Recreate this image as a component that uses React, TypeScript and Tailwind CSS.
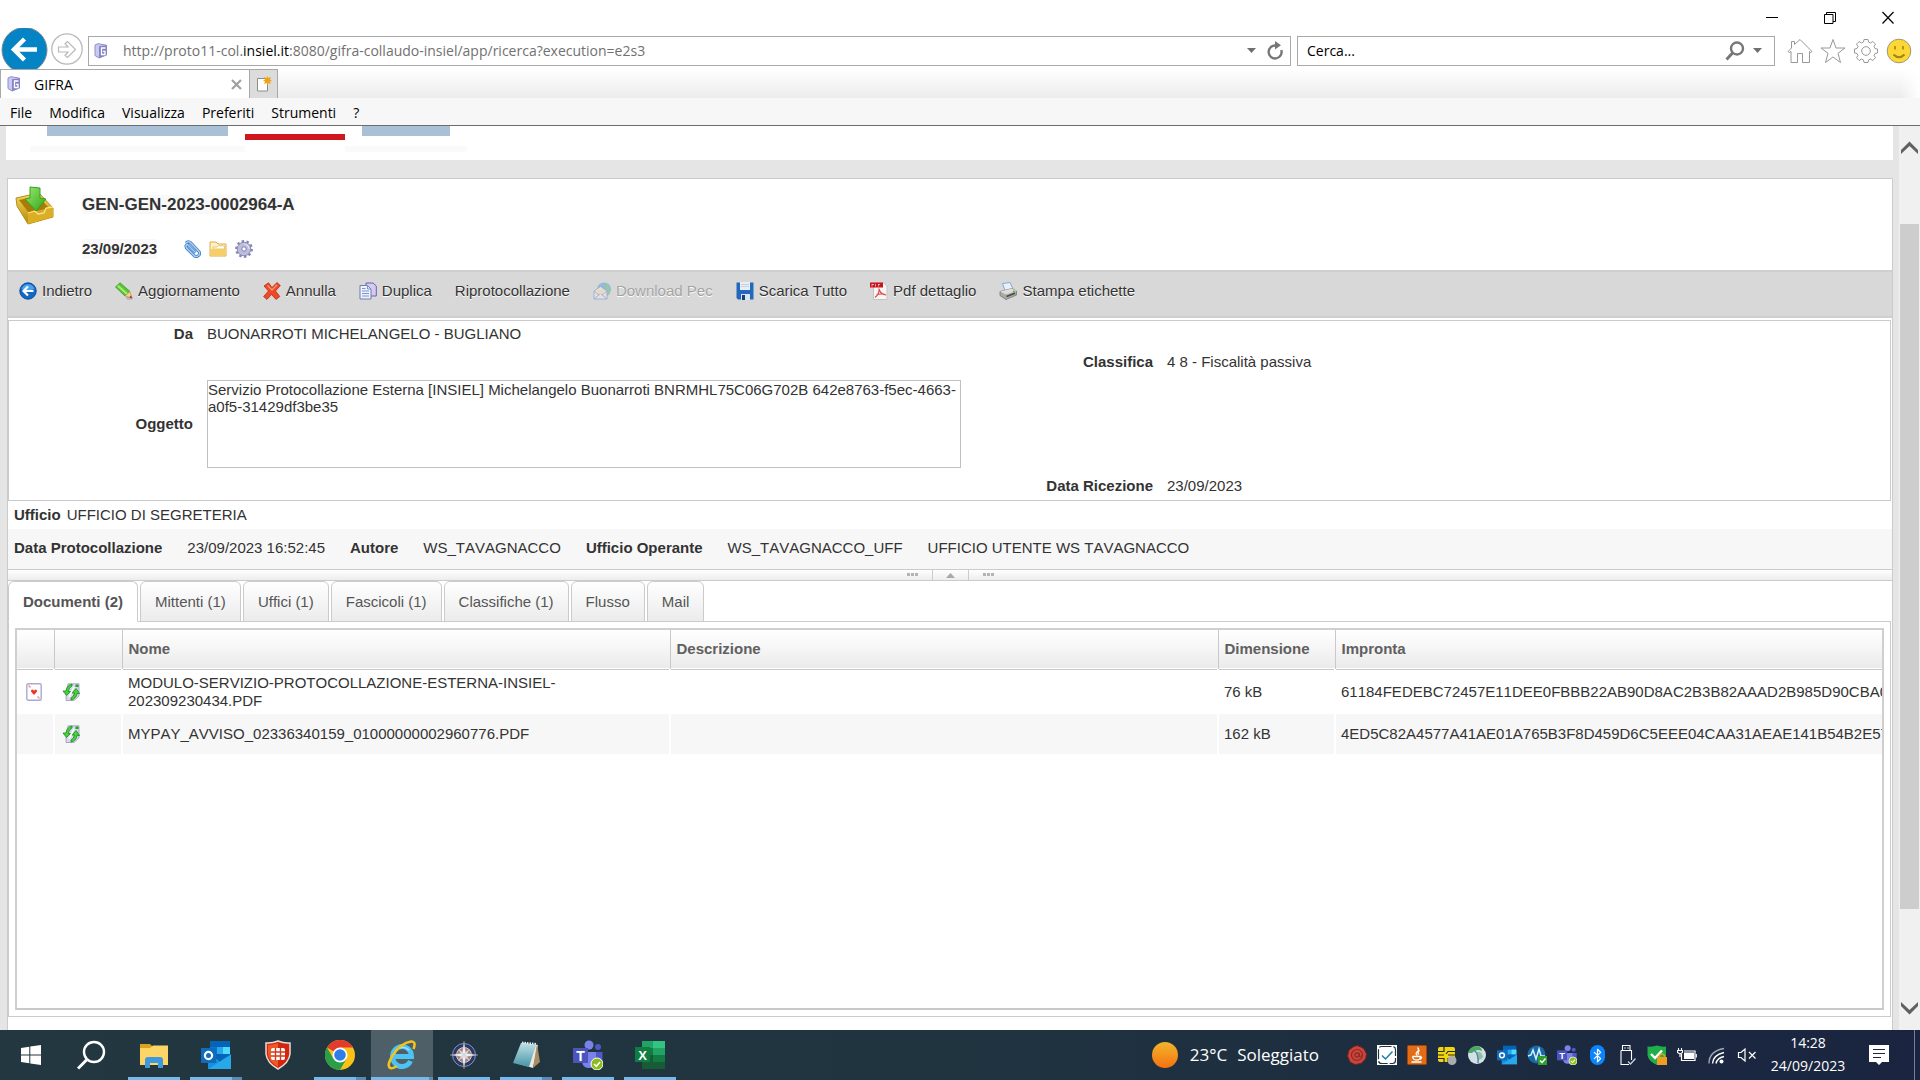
import React, { useState } from 'react';
import { Bluetooth } from 'lucide-react';

const ServerIcon = () => (
  <svg width="14" height="16" viewBox="0 0 14 16" className="shrink-0" aria-hidden="true">
    <path d="M1 2 L4 0.7 L12.5 2.2 L12.5 12 L5 15 L1 12.5 Z" fill="#c9c9f2" stroke="#8f8fc8" />
    <path d="M5 3.2 L13 2.2 L13 12 L5 15 Z" fill="#8484c6" />
    <path d="M11.5 5 H7.5 V11.5 H11 V8.3 H9" fill="none" stroke="#fff" strokeWidth="1.3" />
  </svg>
);

const InboxIcon = () => (
  <svg width="40" height="40" viewBox="0 0 40 40" aria-hidden="true">
    <defs>
      <linearGradient id="tray" x1="0" y1="0" x2="0" y2="1">
        <stop offset="0" stopColor="#f6d75c" />
        <stop offset="1" stopColor="#b98a0a" />
      </linearGradient>
      <linearGradient id="down" x1="0" y1="0" x2="1" y2="1">
        <stop offset="0" stopColor="#9bea6c" />
        <stop offset="1" stopColor="#2fa51c" />
      </linearGradient>
    </defs>
    <path d="M1 13 L24 8 L38 23 L38 32 L13 39 L2 21 Z" fill="url(#tray)" stroke="#b58f1c" />
    <path d="M4 15 L23 11 L34 23 L14 28 Z" fill="#a97b08" />
    <path d="M13 28 L20 26 L23 29 L29 28 L31 23 L38 22 L38 32 L13 39 Z" fill="#dcae24" />
    <path d="M13 28 L20 26 L23 29 L29 28 L31 23 L38 22" fill="none" stroke="#fbe58a" strokeWidth="1.3" />
    <path d="M15 2 L25 3 L25 13 L31 14 L21 26 L10 14 L15 13 Z" fill="url(#down)" stroke="#36a01f" />
  </svg>
);

const Svg18 = ({ children, className = '' }: any) => (
  <svg width="18" height="18" viewBox="0 0 18 18" className={`shrink-0 ${className}`} aria-hidden="true">
    {children}
  </svg>
);

const ClipIcon = () => (
  <Svg18>
    <path d="M3 3 Q5 0.5 8 3 L16 11.5 Q17.5 14.5 15 16 Q12.5 17.5 10.5 15 L3.5 8 Q2 5 4.5 4.5 L12.5 12.5" fill="none" stroke="#3f7fc4" strokeWidth="3" />
    <path d="M3 3 Q5 0.5 8 3 L16 11.5 Q17.5 14.5 15 16 Q12.5 17.5 10.5 15 L3.5 8 Q2 5 4.5 4.5 L12.5 12.5" fill="none" stroke="#a9d0f3" strokeWidth="1.4" />
  </Svg18>
);

const SmallFolderIcon = () => (
  <Svg18>
    <path d="M1 2 H7 L9 4 H17 V16 H1 Z" fill="#fff3c4" stroke="#e3a843" />
    <path d="M4 7 H8 L9.5 5.8 H15.5 V9 H4 Z" fill="#fff" stroke="#e6b85c" strokeWidth="0.8" />
    <path d="M2 9 H16 V15 H2 Z" fill="#f5cf63" />
  </Svg18>
);

const CogIcon = () => (
  <Svg18>
    <circle cx="9" cy="9" r="7.2" fill="none" stroke="#8585b3" strokeWidth="3.4" strokeDasharray="2.3 2.2" />
    <circle cx="9" cy="9" r="6.8" fill="#bcbcdd" stroke="#8b8bb8" />
    <circle cx="9" cy="9" r="2.2" fill="#fff" stroke="#7d7dac" />
    <path d="M9 4 A5 5 0 0 1 14 9" fill="none" stroke="#e2e2f4" strokeWidth="1.2" />
  </Svg18>
);

const BackIcon = () => (
  <Svg18>
    <circle cx="9" cy="9" r="8.2" fill="#1268c4" stroke="#0c4c96" />
    <path d="M2.5 7 A6.8 6.8 0 0 1 15.5 7 Q9 9.5 2.5 7" fill="#49a3ee" />
    <path d="M14.5 9 H5 M9 4.5 L4.5 9 L9 13.5" fill="none" stroke="#fff" strokeWidth="2.2" />
  </Svg18>
);

const PencilIcon = () => (
  <Svg18>
    <ellipse cx="14.5" cy="16" rx="3.5" ry="1.8" fill="#b5b5b5" />
    <path d="M0.5 5 L5 0.8 L15 9.5 L10 14 Z" fill="#5cc531" stroke="#3a9a1c" strokeWidth="0.8" />
    <path d="M2.8 3.8 L12.5 12.2" stroke="#a6ee7c" strokeWidth="1.8" />
    <path d="M10 14 L15 9.5 L16.8 16 Z" fill="#f3cf9a" stroke="#c78a4a" strokeWidth="0.7" />
    <path d="M14.3 15.2 L16.2 13.5 L16.9 16.6 Z" fill="#a1301c" />
  </Svg18>
);

const CrossIcon = () => (
  <Svg18>
    <path d="M1 4 L5.5 0.8 L9 5.5 L14 0.6 L17.3 3.5 L12.5 9 L16.8 14.5 L13 17.4 L8.5 12.5 L4 17.4 L0.6 14.5 L5.5 9 Z" fill="#ee4a28" stroke="#b92a12" strokeWidth="0.8" />
    <path d="M4.5 3.5 L9 8 L14 2.8" fill="none" stroke="#ff9a7c" strokeWidth="1.2" />
  </Svg18>
);

const CopyIcon = () => (
  <Svg18>
    <path d="M7 1 H14 L17.3 4 V14 H7 Z" fill="#d4cbef" stroke="#6c5fae" />
    <path d="M1 3.5 H8.5 L12 7 V17 H1 Z" fill="#eef2fd" stroke="#6a7fb5" />
    <path d="M8.5 3.5 V7 H12 M3 9 H10 M3 11.5 H10 M3 14 H10 M3 6.5 H6.5" fill="none" stroke="#7f95c6" />
  </Svg18>
);

const MailIcon = () => (
  <Svg18 className="opacity-50">
    <circle cx="11" cy="7.5" r="7" fill="#4e9fd4" />
    <path d="M11 1 Q17.5 4 16.5 10 L13 12 Q15 6 11 1" fill="#62bd58" />
    <path d="M1 9 L7.5 4.5 L14 9 V17 H1 Z" fill="#e9edfa" stroke="#7a86bb" />
    <path d="M1 17 L7.5 11.5 L14 17 M1 9 L6 13 M14 9 L9 13" fill="none" stroke="#7a86bb" />
    <path d="M4 7.5 H11 V10 L7.5 12.5 L4 10 Z" fill="#f4dd9b" />
  </Svg18>
);

const SaveIcon = () => (
  <Svg18>
    <path d="M0.5 0.5 H17.5 V17.5 H2 L0.5 16 Z" fill="#2468bd" />
    <path d="M4 0 H14 V8 H4 Z" fill="#e9eef4" />
    <path d="M5 2.5 H13 M5 4.5 H13" stroke="#c8d0dc" />
    <path d="M5 12 H14 V18 H5 Z" fill="#dbe3ec" />
    <path d="M6 13 H9 V18 H6 Z" fill="#163f80" />
  </Svg18>
);

const PdfIcon = () => (
  <Svg18>
    <path d="M3.5 1 H14 L17 4 V17.5 H3.5 Z" fill="#f7f7f7" stroke="#c4c4c4" />
    <rect x="0" y="0.5" width="13" height="5" fill="#c9151b" />
    <path d="M2 2 V4.5 M2 2.5 H4 M5.5 2 V4.5 M8.5 2 V4.5 M8.5 2.5 H10" stroke="#fff" strokeWidth="0.6" />
    <path d="M9 6.5 C9.5 10 8 13 5 15.5 M9 7 C10 10.5 12.5 12.5 16 13 M6.5 13 C9 11.8 12 11.6 15.5 12.6" fill="none" stroke="#e2504b" strokeWidth="1.2" />
  </Svg18>
);

const PrintIcon = () => (
  <Svg18>
    <path d="M3.5 1.5 L11 0.5 L14.5 8 L6.5 10 Z" fill="#e6f1fb" stroke="#8aa9c9" />
    <path d="M1 9.5 L13 6.5 L17.5 9 V13 L7 17.5 L1 13.5 Z" fill="#a9aaa5" stroke="#777" strokeWidth="0.8" />
    <path d="M1 9.5 L13 6.5 L17.5 9 L7 12.5 Z" fill="#dcdcd8" />
    <path d="M7.5 14.5 L16 11.2" stroke="#4a4a4a" strokeWidth="1.6" />
    <circle cx="14.8" cy="9.6" r="1" fill="#62b536" />
  </Svg18>
);

const CardIcon = () => (
  <svg width="16" height="18" viewBox="0 0 16 18" aria-hidden="true">
    <rect x="0.8" y="0.8" width="14.4" height="16.4" rx="1.5" fill="#fdfdff" stroke="#a9a9d3" strokeWidth="1.4" />
    <path d="M8 12 L5 8.5 Q4.8 6.5 6.5 6.6 Q7.6 6.8 8 8 Q8.4 6.8 9.5 6.6 Q11.2 6.5 11 8.5 Z" fill="#f0341c" />
    <path d="M2.5 2.5 L4.5 4.5 M11.5 13.5 L13.5 15.5" stroke="#f38b7a" strokeWidth="1.2" />
  </svg>
);

const SyncDocIcon = () => (
  <Svg18>
    <path d="M6 0.8 H17 V13 L12 17.5 H4 V10 Z" fill="#d8d8ea" stroke="#9a9abc" strokeWidth="0.8" />
    <path d="M10 1 Q4.5 2.5 4 8 H1 L4.500 12.500 L8.500 8.500 H6.300 Q6.800 4.500 10 3 Z" fill="#45d23b" stroke="#168c19" strokeWidth="0.8" />
    <path d="M9 17 Q14.500 15.500 15 10.500 H17.600 L14 5.500 L10 10 H12.500 Q12 13.500 9 15 Z" fill="#45d23b" stroke="#168c19" strokeWidth="0.8" />
    <path d="M12 4 L7 14" stroke="#fff" strokeWidth="1.5" />
    <rect x="13.500" y="1.500" width="3" height="2.500" fill="#21a321" />
  </Svg18>
);

const toolbar = [
  { label: 'Indietro', icon: BackIcon },
  { label: 'Aggiornamento', icon: PencilIcon },
  { label: 'Annulla', icon: CrossIcon },
  { label: 'Duplica', icon: CopyIcon },
  { label: 'Riprotocollazione' },
  { label: 'Download Pec', icon: MailIcon, disabled: true },
  { label: 'Scarica Tutto', icon: SaveIcon },
  { label: 'Pdf dettaglio', icon: PdfIcon },
  { label: 'Stampa etichette', icon: PrintIcon },
];

const tabs = ['Documenti (2)', 'Mittenti (1)', 'Uffici (1)', 'Fascicoli (1)', 'Classifiche (1)', 'Flusso', 'Mail'];

const documents = [
  {
    main: true,
    name: 'MODULO-SERVIZIO-PROTOCOLLAZIONE-ESTERNA-INSIEL-202309230434.PDF',
    size: '76 kB',
    hash: '61184FEDEBC72457E11DEE0FBBB22AB90D8AC2B3B82AAAD2B985D90CBA0',
  },
  {
    main: false,
    name: 'MYPAY_AVVISO_02336340159_01000000002960776.PDF',
    size: '162 kB',
    hash: '4ED5C82A4577A41AE01A765B3F8D459D6C5EEE04CAA31AEAE141B54B2E57',
  },
];

const menu = ['File', 'Modifica', 'Visualizza', 'Preferiti', 'Strumenti', '?'];

const BrowserChrome = () => (
  <header className="shrink-0 font-['Open_Sans',sans-serif] text-[14px] text-black">
    <div className="flex h-7 items-end justify-end gap-[46px] pr-[26px]">
      <button aria-label="Riduci a icona">
        <svg width="12" height="18" viewBox="0 0 12 18"><path d="M0 7.5 H12" stroke="#000" /></svg>
      </button>
      <button aria-label="Ripristina">
        <svg width="12" height="18" viewBox="0 0 12 18" fill="none" stroke="#000"><path d="M0.5 4.5 H9 V13.5 H0.5 Z M2.5 4.5 V2.5 H11.5 V11.5 H9" /></svg>
      </button>
      <button aria-label="Chiudi">
        <svg width="12" height="18" viewBox="0 0 12 18"><path d="M0.5 2 L11.5 13.5 M11.5 2 L0.5 13.5" stroke="#000" strokeWidth="1.2" /></svg>
      </button>
    </div>
    <div className="flex h-[41px] items-center overflow-hidden pr-2">
      <button aria-label="Indietro" className="h-[46px] w-12 shrink-0">
        <svg width="48" height="48" viewBox="0 0 48 48">
          <circle cx="24.5" cy="24" r="22.5" fill="#0483c5" stroke="#7d8a92" />
          <path d="M37 23.5 H14 M24.5 13 L14 23.5 L24.5 34" fill="none" stroke="#fff" strokeWidth="4.5" />
        </svg>
      </button>
      <button aria-label="Avanti" className="ml-[2px] shrink-0">
        <svg width="34" height="34" viewBox="0 0 34 34" fill="none">
          <circle cx="17" cy="17" r="15.2" stroke="#b9b9b9" strokeWidth="1.3" />
          <path d="M8.5 15 H18 L15 11.5 L17.5 9.5 L25.5 17.5 L17.5 25.5 L15 23.5 L18 20 H8.5 Z" stroke="#b9b9b9" strokeWidth="1.2" />
        </svg>
      </button>
      <div className="ml-1 mt-1 flex h-[30px] flex-1 items-center border border-[#a9a9a9] pr-[6px] pl-[5px]">
        <ServerIcon />
        <div role="textbox" aria-label="Indirizzo" className="ml-[15px] flex-1 text-[#717171]">
          http://proto11-col.<span className="text-black">insiel.it</span>:8080/gifra-collaudo-insiel/app/ricerca?execution=e2s3
        </div>
        <svg width="9" height="5" viewBox="0 0 9 5" className="mr-[10px]" aria-hidden="true"><path d="M0 0 H9 L4.500 5 Z" fill="#6f6f6f" /></svg>
        <button aria-label="Aggiorna">
          <svg width="18" height="20" viewBox="0 0 18 20">
            <path d="M10 4.500 A6.500 6.500 0 1 0 15.300 9" fill="none" stroke="#777" strokeWidth="2.400" />
            <path d="M9 0 L15 4.300 L9 8.500 Z" fill="#777" />
          </svg>
        </button>
      </div>
      <div className="ml-[6px] mt-1 flex h-[30px] w-[478px] items-center border border-[#a9a9a9] pr-3 pl-[9px]">
        <input aria-label="Cerca" placeholder="Cerca..." className="min-w-0 flex-1 outline-none placeholder:text-black" />
        <svg width="20" height="20" viewBox="0 0 20 20" className="mr-2" aria-hidden="true">
          <circle cx="12" cy="7.500" r="6" fill="none" stroke="#777" strokeWidth="2.400" />
          <path d="M8 11.500 L1.500 18.500" stroke="#777" strokeWidth="3" />
        </svg>
        <svg width="9" height="5" viewBox="0 0 9 5" aria-hidden="true"><path d="M0 0 H9 L4.500 5 Z" fill="#6f6f6f" /></svg>
      </div>
      <div className="ml-3 mt-1 flex gap-[7px]">
        <button aria-label="Pagina iniziale">
          <svg width="26" height="26" viewBox="0 0 26 26" fill="none" stroke="#989898">
            <path d="M1 13.500 L4.500 10 V3.500 H7.500 V6.500 L13 1.500 L25 13.500 L23.500 14.500 L22.500 13.500 V24.500 H15.500 V15.500 H10.500 V24.500 H4 V13.500 L2.500 14.500 Z" />
          </svg>
        </button>
        <button aria-label="Preferiti">
          <svg width="26" height="26" viewBox="0 0 26 26" fill="none" stroke="#989898">
            <path d="M13 1.500 L16 10 H25 L18 15.300 L20.500 24.500 L13 19 L5.500 24.500 L8 15.300 L1 10 H10 Z" />
          </svg>
        </button>
        <button aria-label="Strumenti">
          <svg width="26" height="26" viewBox="0 0 26 26" fill="none" stroke="#989898">
            <path d="M10.500 4 L11 1.500 H15 L15.500 4 L17.500 5 L19.800 3.500 L22.500 6.200 L21 8.500 L22 10.500 L24.500 11 V15 L22 15.500 L21 17.500 L22.500 19.800 L19.800 22.500 L17.500 21 L15.500 22 L15 24.500 H11 L10.500 22 L8.500 21 L6.200 22.500 L3.500 19.800 L5 17.500 L4 15.500 L1.500 15 V11 L4 10.500 L5 8.500 L3.500 6.200 L6.200 3.500 L8.500 5 Z" />
            <circle cx="13" cy="13" r="4.300" />
          </svg>
        </button>
        <button aria-label="Invia feedback">
          <svg width="26" height="26" viewBox="0 0 26 26">
            <circle cx="13" cy="13" r="11.800" fill="#fdd835" stroke="#9f9679" />
            <path d="M9 8 V11.500 M17 8 V11.500" stroke="#a08417" strokeWidth="1.600" />
            <path d="M7.500 16.500 Q13 22 18.500 16.500" fill="none" stroke="#a08417" strokeWidth="2" />
          </svg>
        </button>
      </div>
    </div>
    <div className="flex h-[29px] bg-gradient-to-b from-white to-[#ececec]">
      <div className="flex w-[249px] items-center border-t border-l border-[#a9a9a9] bg-white pr-[7px] pl-[6px]">
        <ServerIcon />
        <span className="ml-[13px] flex-1">GIFRA</span>
        <button aria-label="Chiudi scheda">
          <svg width="11" height="11" viewBox="0 0 11 11"><path d="M1 1 L10 10 M10 1 L1 10" stroke="#a0a0a0" strokeWidth="2.200" /></svg>
        </button>
      </div>
      <button aria-label="Nuova scheda" className="flex w-[29px] items-center justify-center border border-b-0 border-[#a9a9a9] bg-[#dcdcdc]">
        <svg width="16" height="16" viewBox="0 0 16 16">
          <path d="M1.500 2.500 H11.500 V15 H1.500 Z" fill="#fff" stroke="#8c8c8c" />
          <path d="M11.500 0 L12.500 2 L15 1 L14 3.500 L16 4.500 L14 5.500 L15 8 L12.500 7 L11.500 9 L10.500 7 L8 8 L9 5.500 L7 4.500 L9 3.500 L8 1 L10.500 2 Z" fill="#f0a318" />
        </svg>
      </button>
      <div className="ml-auto w-5 bg-gradient-to-l from-white to-transparent" />
    </div>
    <nav className="flex h-7 items-center gap-[17px] border-b border-[#6d6d6d] bg-[#f7f7f7] pt-px pl-[10px]">
      {menu.map(m => <button key={m}>{m}</button>)}
    </nav>
  </header>
);

const DocumentTable = () => (
  <div className="mx-[6px] h-[382px] overflow-hidden border-2 border-[#cfcfcf] border-b-[#c9c9c9]">
    <table className="w-full table-fixed border-collapse text-left">
      <colgroup>
        <col className="w-[37px]" />
        <col className="w-[68px]" />
        <col className="w-[548px]" />
        <col className="w-[548px]" />
        <col className="w-[117px]" />
        <col />
      </colgroup>
      <thead>
        <tr className="h-[39px] border-b border-[#c9c9c9] bg-gradient-to-b from-white to-[#ebebeb] text-[#606060]">
          <th aria-label="Principale" className="border-r border-[#c9c9c9]" />
          <th aria-label="Azioni" className="border-r border-[#c9c9c9]" />
          <th className="border-r border-[#c9c9c9] pl-[6px]">Nome</th>
          <th className="border-r border-[#c9c9c9] pl-[6px]">Descrizione</th>
          <th className="border-r border-[#c9c9c9] pl-[6px]">Dimensione</th>
          <th className="pl-[6px]">Impronta</th>
        </tr>
      </thead>
      <tbody>
        {documents.map(d => (
          <tr key={d.name} className="h-10 leading-[18px] even:bg-[#f7f7f7]">
            <td className="border-r-2 border-white pl-[9px]">{d.main && <CardIcon />}</td>
            <td className="border-r-2 border-white pl-[7px]"><button aria-label="Scarica documento" className="block"><SyncDocIcon /></button></td>
            <td className="border-r-2 border-white py-1 pr-24 pl-[5px]">{d.name}</td>
            <td className="border-r-2 border-white" />
            <td className="border-r-2 border-white pl-[5px]">{d.size}</td>
            <td className="overflow-hidden pl-[5px] whitespace-nowrap">{d.hash}</td>
          </tr>
        ))}
      </tbody>
    </table>
  </div>
);

const Dots = () => (
  <svg width="11" height="4" viewBox="0 0 11 4" aria-hidden="true"><path d="M0 0 H3 V3 H0 Z M4 0 H7 V3 H4 Z M8 0 H11 V3 H8 Z" fill="#b4b4b4" /></svg>
);

const RecordPage = () => {
  const [tab, setTab] = useState(0);

  return (
    <main className="min-w-0 flex-1 overflow-hidden bg-[#e5e5e5] px-[6px] font-['Liberation_Sans',Arial,sans-serif] text-[15px] text-[#333] [font-kerning:none]">
      <div className="h-[34px] bg-white pl-6">
        <div className="flex items-start pl-[17px]">
          <div className="h-[10px] w-[181px] bg-[#aac0d6]" />
          <div className="mt-2 ml-[17px] h-[6px] w-[100px] bg-[#cf171f]" />
          <div className="ml-[17px] h-[10px] w-[88px] bg-[#aac0d6]" />
        </div>
        <div className="mt-[6px] flex gap-[100px]">
          <div className="h-[6px] w-[215px] bg-[#fafafa]" />
          <div className="h-[6px] w-[122px] bg-[#fafafa]" />
        </div>
      </div>

      <div className="mt-[18px] ml-px min-h-full border border-[#cbcbcb] bg-white">
        <section className="flex h-[91px] pt-[6px] pl-[7px]">
          <InboxIcon />
          <div className="ml-[27px]">
            <h1 className="mt-[10px] text-[17px] leading-5 font-bold"><span className="bg-[#f9f9f9]">GEN-GEN-2023-0002964-A</span></h1>
            <div className="mt-6 flex items-center gap-2 leading-5">
              <strong className="mr-[18px] bg-[#f9f9f9]">23/09/2023</strong>
              <ClipIcon />
              <SmallFolderIcon />
              <CogIcon />
            </div>
          </div>
        </section>

        <div className="flex h-12 gap-[23px] border-y-2 border-[#cfcfcf] bg-[#d8d8d8] pt-[9px] pl-[11px]">
          {toolbar.map(({ label, icon: Icon, disabled }) => (
            <button key={label} disabled={disabled} className="flex h-5 items-center gap-[5px] disabled:text-[#a3a3a3] [text-shadow:0_1px_0_#fff]">
              {Icon && <Icon />}
              <span>{label}</span>
            </button>
          ))}
        </div>

        <section className="mt-[2px] mr-px flex h-[181px] border border-[#cbcbcb]">
          <div className="pt-[3px]">
            <div className="flex h-[56px]">
              <span className="w-[184px] text-right leading-5 font-bold">Da</span>
              <span className="ml-[14px] leading-5">BUONARROTI MICHELANGELO - BUGLIANO</span>
            </div>
            <div className="flex items-center">
              <label htmlFor="oggetto" className="w-[184px] text-right font-bold">Oggetto</label>
              <textarea
                id="oggetto"
                readOnly
                className="ml-[14px] h-[88px] w-[754px] resize-none border border-[#c0c0c0] leading-[17px] outline-none"
                defaultValue="Servizio Protocollazione Esterna [INSIEL] Michelangelo Buonarroti BNRMHL75C06G702B 642e8763-f5ec-4663-a0f5-31429df3be35"
              />
            </div>
          </div>
          <div className="pt-[31px]">
            <div className="flex h-[124px] leading-5">
              <span className="w-[192px] text-right font-bold">Classifica</span>
              <span className="ml-[14px]">4 8 - Fiscalità passiva</span>
            </div>
            <div className="flex leading-5">
              <span className="w-[192px] text-right font-bold">Data Ricezione</span>
              <span className="ml-[14px]">23/09/2023</span>
            </div>
          </div>
        </section>

        <div className="flex h-7 items-center gap-[6px] pl-[6px]">
          <strong>Ufficio</strong>
          <span>UFFICIO DI SEGRETERIA</span>
        </div>
        <div className="flex h-10 items-center gap-[25px] bg-[#f7f7f7] pb-[2px] pl-[6px]">
          <strong>Data Protocollazione</strong>
          <span>23/09/2023 16:52:45</span>
          <strong>Autore</strong>
          <span>WS_TAVAGNACCO</span>
          <strong>Ufficio Operante</strong>
          <span>WS_TAVAGNACCO_UFF</span>
          <span>UFFICIO UTENTE WS TAVAGNACCO</span>
        </div>

        <div className="flex h-3 items-center justify-center gap-[14px] border-y border-[#cbcbcb] bg-gradient-to-b from-white to-[#ededed]">
          <Dots />
          <button aria-label="Comprimi" className="flex h-full w-[37px] items-center justify-center border-x border-[#cbcbcb]">
            <svg width="9" height="5" viewBox="0 0 9 5"><path d="M4.500 0 L9 5 H0 Z" fill="#a9a9a9" /></svg>
          </button>
          <Dots />
        </div>

        <div role="tablist" className="relative z-10 flex h-[41px] gap-[2px] text-[#555]">
          {tabs.map((name, i) => (
            <button
              key={name}
              role="tab"
              aria-selected={tab === i}
              onClick={() => setTab(i)}
              className={`rounded-t-md border border-[#cbcbcb] px-[14px] pt-[2px] ${tab === i ? 'border-b-white bg-white font-bold' : 'bg-gradient-to-b from-white to-[#ebebeb]'}`}
            >
              {name}
            </button>
          ))}
        </div>
        <div className="-mt-px mr-px border border-[#cbcbcb] py-[6px]">
          <DocumentTable />
        </div>
      </div>
    </main>
  );
};

const OutlookIcon = ({ size }: { size: number }) => (
  <svg width={size} height={size} viewBox="0 0 30 30" aria-hidden="true">
    <path d="M9 1 H29 V20 H9 Z" fill="#0364b8" />
    <path d="M9 7 H16 V14 H9 Z" fill="#0078d4" />
    <path d="M16 7 H29 V14 H16 Z" fill="#28a8ea" />
    <path d="M22 7 H29 V14 H22 Z" fill="#50d9ff" />
    <path d="M7 14 L19 21 L30 14 V29 H7 Z" fill="#1490df" />
    <path d="M7 29 L30 15 V29 Z" fill="#28a8ea" />
    <path d="M0 8 H15 V23 H0 Z" fill="#0f6cbd" />
    <circle cx="7.500" cy="15.500" r="3.600" fill="none" stroke="#fff" strokeWidth="2.200" />
  </svg>
);

const TeamsIcon = ({ size }: { size: number }) => (
  <svg width={size} height={size} viewBox="0 0 30 30" aria-hidden="true">
    <circle cx="16" cy="5" r="4.500" fill="#7b83eb" />
    <circle cx="25" cy="7" r="3" fill="#5059c9" />
    <path d="M20 12 H29.500 V21 Q28 25 23 24 Z" fill="#5059c9" />
    <path d="M9 12 H23 V22 Q22 28 16 28 Q10 28 9 22 Z" fill="#7b83eb" />
    <path d="M0 8 H15 V23 H0 Z" fill="#4b53bc" />
    <text x="7.500" y="20.500" textAnchor="middle" fill="#fff" fontSize="14" fontWeight="bold" fontFamily="Liberation Sans">T</text>
    <circle cx="24" cy="24" r="6" fill="#8cbd18" stroke="#fff" />
    <path d="M21 24 L23.300 26.300 L27 22" fill="none" stroke="#fff" strokeWidth="1.600" />
  </svg>
);

const StartIcon = () => (
  <svg width="20" height="20" viewBox="0 0 20 20" fill="#fff"><path d="M0 3 L8.300 1.700 V9.500 H0 Z M9.300 1.500 L20 0 V9.500 H9.300 Z M0 10.500 H8.300 V18.300 L0 17 Z M9.300 10.500 H20 V20 L9.300 18.500 Z" /></svg>
);

const SearchIcon = () => (
  <svg width="30" height="30" viewBox="0 0 30 30" fill="none" stroke="#fff"><circle cx="17" cy="12" r="10" strokeWidth="2.400" /><path d="M10 19.500 L1 28.500" strokeWidth="3" /></svg>
);

const ExplorerIcon = () => (
  <svg width="28" height="28" viewBox="0 0 28 28">
    <path d="M0 3 H10 L13 6 H28 V24 H0 Z" fill="#dfa01b" />
    <path d="M0 7 H10 L13 4.500 H28 V24 H0 Z" fill="#fdd567" />
    <path d="M5 27 V19 Q5 16 8 16 H20 Q23 16 23 19 V27 H18 V22 H10 V27 Z" fill="#3f97dd" />
  </svg>
);

const ShieldIcon = () => (
  <svg width="26" height="30" viewBox="0 0 26 30">
    <path d="M1 3 Q7 3.500 13 1 Q19 3.500 25 3 V14 Q24 23 13 29 Q2 23 1 14 Z" fill="#d4250f" stroke="#e5dcd8" strokeWidth="1.500" />
    <path d="M3 5 Q8 5 13 3 V27 Q4 22 3 14 Z" fill="#ee5a26" />
    <rect x="6" y="8" width="14" height="12" rx="2" fill="#fff" />
    <path d="M6 12 H20 M6 16 H20 M10.500 8 V20 M15.500 8 V20" stroke="#d43a1c" strokeWidth="1.400" />
  </svg>
);

const ChromeIcon = () => (
  <svg width="30" height="30" viewBox="0 0 30 30">
    <circle cx="15" cy="15" r="15" fill="#fbc116" />
    <path d="M15 15 L2 7.500 A15 15 0 0 1 28 7.500 H15 Z" fill="#e33b2e" />
    <path d="M2 7.500 A15 15 0 0 0 15 30 L21.500 18.700 L8.500 18.700 Z" fill="#2b9f47" />
    <circle cx="15" cy="15" r="7.500" fill="#fff" />
    <circle cx="15" cy="15" r="5.800" fill="#2f7de9" />
  </svg>
);

const IeIcon = () => (
  <svg width="30" height="30" viewBox="0 0 30 30" fill="none">
    <path d="M6 16.500 H24.500 A9.500 10 0 1 0 23.500 21" stroke="#4cc3f3" strokeWidth="5" />
    <path d="M7 14 A9 9 0 0 1 22 10" stroke="#a8e6fc" strokeWidth="1.400" />
    <path d="M26.500 9 Q29.500 1 24 1.500 Q14 3 6 15 Q-1 26 3.500 28 Q6 28.800 10 26" stroke="#f2c31e" strokeWidth="2.600" />
  </svg>
);

const CompassIcon = () => (
  <svg width="28" height="28" viewBox="0 0 28 28">
    <circle cx="14" cy="14" r="11.500" fill="#27386b" stroke="#8b93ad" />
    <circle cx="14" cy="14" r="7.500" fill="#b5785e" stroke="#d7d2cf" />
    <path d="M14 0 L16 12 L28 14 L16 16 L14 28 L12 16 L0 14 L12 12 Z" fill="#f1f1f1" stroke="#77809b" strokeWidth="0.500" />
    <path d="M8 8 L14 12 L20 8 L16 14 L20 20 L14 16 L8 20 L12 14 Z" fill="#d5dbe4" />
  </svg>
);

const NotesIcon = () => (
  <svg width="28" height="28" viewBox="0 0 28 28">
    <defs>
      <linearGradient id="note" x1="0" y1="0" x2="0" y2="1">
        <stop offset="0" stopColor="#bfe0e6" />
        <stop offset="1" stopColor="#4695a6" />
      </linearGradient>
    </defs>
    <path d="M11 2 L26 4 L21 27 L7 23 Z" fill="#e8e8e4" />
    <path d="M25 3 L28 21 L21 27 Z" fill="#a98d63" />
    <path d="M9 2 L24 4 L17 26 L1 22 Z" fill="url(#note)" />
    <path d="M10 1.500 L25 3" stroke="#e9f3f5" strokeWidth="2" strokeDasharray="1.500 1" />
  </svg>
);

const ExcelIcon = () => (
  <svg width="30" height="28" viewBox="0 0 30 28">
    <path d="M7 0 H18 V7 H7 Z" fill="#21a366" />
    <path d="M18 0 H30 V7 H18 Z" fill="#33c481" />
    <path d="M7 7 H18 V14 H7 Z" fill="#107c41" />
    <path d="M18 7 H30 V14 H18 Z" fill="#21a366" />
    <path d="M7 14 H30 V28 H7 Z" fill="#185c37" />
    <path d="M18 14 H30 V21 H18 Z" fill="#107c41" />
    <path d="M0 6 H15 V21 H0 Z" fill="#107c41" />
    <text x="7.500" y="18.500" textAnchor="middle" fill="#fff" fontSize="13" fontWeight="bold" fontFamily="Liberation Sans">X</text>
  </svg>
);

const apps = [
  { name: 'Cerca', icon: <SearchIcon /> },
  { name: 'Esplora file', icon: <ExplorerIcon />, open: true },
  { name: 'Outlook', icon: <OutlookIcon size={30} />, open: true, stacked: true },
  { name: 'Sicurezza', icon: <ShieldIcon /> },
  { name: 'Chrome', icon: <ChromeIcon />, open: true, stacked: true },
  { name: 'Internet Explorer', icon: <IeIcon />, open: true, stacked: true, active: true },
  { name: 'Bussola', icon: <CompassIcon />, open: true },
  { name: 'Blocco note', icon: <NotesIcon />, open: true, stacked: true },
  { name: 'Teams', icon: <TeamsIcon size={30} />, open: true },
  { name: 'Excel', icon: <ExcelIcon />, open: true },
];

const Tray = ({ children }: any) => (
  <svg width="20" height="20" viewBox="0 0 20 20" fill="none" className="shrink-0" aria-hidden="true">{children}</svg>
);

const TrayIcons = () => (
  <div className="flex items-center gap-[10px]">
    <Tray>
      <path d="M10 0.500 L14 2 L17 4 L19.500 9 L18.500 14 L14 18.500 L8 19.500 L3 17 L0.500 11 L2 5 L6 2 Z" fill="#c9463c" stroke="#7c211c" />
      <circle cx="10" cy="10" r="5.500" stroke="#8e2822" strokeWidth="1.200" />
      <circle cx="10" cy="10" r="2.200" stroke="#8e2822" strokeWidth="1.200" />
      <path d="M12.300 8 V11.500 Q14 13 15 10" stroke="#8e2822" />
    </Tray>
    <Tray>
      <rect width="20" height="20" fill="#fff" />
      <rect x="1.500" y="1.500" width="17" height="17" rx="3" stroke="#1f3340" strokeWidth="1.200" strokeDasharray="10 2" />
      <path d="M5 10.500 L8.500 14 L15.500 6.500" stroke="#1f7ea1" strokeWidth="1.500" />
    </Tray>
    <Tray>
      <rect x="0.500" y="0.500" width="19" height="19" rx="1" fill="#e36c14" stroke="#a34408" />
      <path d="M10.500 2.500 Q13 5 10 7 Q8 9 10.500 10.500 M12.500 5 Q10 7.500 12 9.500" stroke="#fff" strokeWidth="1.300" />
      <path d="M5.500 11.500 H13.500 Q13.500 15 9.500 15 Q6 15 5.500 11.500 M13.500 12 Q16 12 13 14.500 M4.500 17 H14.500" stroke="#fff" strokeWidth="1.300" />
    </Tray>
    <Tray>
      <rect x="1" y="2" width="17" height="15" rx="2" fill="#f2d413" />
      <path d="M1 6.500 H7 V2 M1 10 H7 M1 13.500 H7 V17 M18 6.500 H11 L9 9 M18 10 H11 M18 13.500 H11 V17" stroke="#26301f" strokeWidth="1.200" />
      <circle cx="15" cy="15.500" r="4.500" fill="#a8adb0" />
    </Tray>
    <Tray>
      <circle cx="10" cy="10" r="9" fill="#d3e0e6" />
      <path d="M1 8 Q3 1 10 1 Q15 2 15 6 Q9 3 5 8 Q3 8 1 8 Z" fill="#4da862" />
      <path d="M9 7 Q15 6 16 12 Q13 16 10 14 Q13 11 9 7" fill="#8fc2a0" />
      <path d="M7 5 Q12 9 11 18" stroke="#4b86a5" strokeWidth="1.400" />
    </Tray>
    <OutlookIcon size={20} />
    <Tray>
      <circle cx="9.500" cy="9.500" r="9" fill="#1769a8" />
      <path d="M1 11 L4 10 L6 5 L9 14 L12 4 L14 11 H18" stroke="#d7f1ff" strokeWidth="1.500" />
      <rect x="11" y="11" width="9" height="9" fill="#2f9e2c" />
      <path d="M13 15.500 L15 17.500 L18.500 13.500" stroke="#fff" strokeWidth="1.400" />
    </Tray>
    <TeamsIcon size={20} />
    <span className="flex h-5 w-5 items-center justify-center">
      <span className="flex h-5 w-[15px] items-center justify-center rounded-full bg-[#0a84ff]">
        <Bluetooth size={15} color="#fff" strokeWidth={2} />
      </span>
    </span>
    <Tray>
      <path d="M5.500 5.500 V0.500 H13 V5.500 M4 5.500 H14.500 V15 M4 5.500 V19.500 H12" stroke="#fff" strokeWidth="1.100" />
      <path d="M7.500 3 H8.500 M10.500 3 H11.500" stroke="#fff" strokeWidth="1.300" />
      <path d="M11 16.500 L13.500 19 L18.500 13.500" stroke="#c8cfd6" strokeWidth="1.300" />
    </Tray>
    <Tray>
      <path d="M0.500 1.500 Q6 2 10 0.500 Q14 2 19 1.500 V11 Q18 17 10 20 Q1 16 0.500 10 Z" fill="#1fae48" />
      <path d="M4 9 L8 13 L15 5.500" stroke="#fff" strokeWidth="2.400" />
      <rect x="10" y="12" width="10" height="8" fill="#f09c22" />
      <path d="M12.500 12 V10.500 Q15 7.500 17.500 10.500 V12" stroke="#f09c22" strokeWidth="1.500" />
    </Tray>
    <Tray>
      <path d="M4.500 9 V15.500 H18 V6 H7" stroke="#fff" strokeWidth="1.200" />
      <rect x="7" y="7.500" width="10" height="6.500" fill="#fff" />
      <path d="M19.300 9 V12.500 M1.500 3 V5 M4.500 3 V5 M0.500 5.500 H5.500 V7.500 L3 9 L0.500 7.500 Z M3 9 V12" stroke="#fff" strokeWidth="1.100" />
    </Tray>
    <Tray>
      <path d="M2 18.500 Q2 6 17 3.500" stroke="#9fa8b4" strokeWidth="1.400" />
      <path d="M5.500 18.500 Q6 10 17 7.500 M9 18.500 Q10 13 17 11.500" stroke="#fff" strokeWidth="1.400" />
      <circle cx="14.500" cy="16.500" r="2" fill="#fff" />
    </Tray>
    <Tray>
      <path d="M1.500 7.500 H4 L8 4 V16 L4 12.500 H1.500 Z" stroke="#fff" strokeWidth="1.200" />
      <path d="M12 7 L18.500 13.500 M18.500 7 L12 13.500" stroke="#fff" strokeWidth="1.200" />
    </Tray>
  </div>
);

const Taskbar = () => (
  <footer className="flex h-[50px] shrink-0 items-stretch bg-gradient-to-r from-[#22373f] via-[#203440] to-[#1a2440] font-['Open_Sans',sans-serif] text-white">
    <button aria-label="Start" className="flex w-[61px] items-center justify-center"><StartIcon /></button>
    {apps.map(app => (
      <button
        key={app.name}
        aria-label={app.name}
        className={`flex w-[62px] flex-col items-center ${app.active ? 'bg-[#4e5f67]' : 'px-[5px]'}`}
      >
        <span className="flex flex-1 items-center">{app.icon}</span>
        {app.open && (
          <span className="-mt-[3px] flex h-[3px] w-full">
            <span className="flex-1 bg-[#76b9ed]" />
            {app.stacked && <span className={`bg-[#5a8bb5] ${app.active ? 'w-1' : 'w-[10px]'}`} />}
          </span>
        )}
      </button>
    ))}
    <div className="ml-auto flex items-center">
      <button className="flex items-center text-[17px]">
        <span className="mr-3 h-[26px] w-[26px] rounded-full bg-gradient-to-b from-[#f2b52c] to-[#f3700f]" />
        <span className="mr-[10px]">23°C</span>
        <span>Soleggiato</span>
      </button>
      <div className="ml-7"><TrayIcons /></div>
      <div className="mr-px ml-[11px] w-[80px] pb-[2px] text-center text-[14px] leading-[23px]">
        <div>14:28</div>
        <div>24/09/2023</div>
      </div>
      <button aria-label="Notifiche" className="ml-5 mr-[25px]">
        <svg width="20" height="20" viewBox="0 0 20 20">
          <path d="M0 0 H20 V17 H13 L10 20 L7 17 H0 Z" fill="#fff" />
          <path d="M4 4.500 H16 M4 8.500 H16 M4 12.500 H12" stroke="#1c2840" strokeWidth="1.200" />
        </svg>
      </button>
      <div className="h-full w-[6px] border-l border-[#76808f]" />
    </div>
  </footer>
);

const Scrollbar = () => (
  <div className="flex w-[21px] shrink-0 flex-col items-center bg-[#f0f0f0] pt-[15px] pr-px pb-[15px]">
    <svg width="17" height="13" viewBox="0 0 17 13" aria-hidden="true"><path d="M0 9 L8.500 0.500 L17 9 V13 L8.500 5 L0 13 Z" fill="#606060" /></svg>
    <div className="flex w-full flex-1 flex-col pt-[70px] pb-[93px] pl-px">
      <div className="flex-1 bg-[#cdcdcd]" />
    </div>
    <svg width="17" height="13" viewBox="0 0 17 13" aria-hidden="true"><path d="M0 4 L8.500 12.500 L17 4 V0 L8.500 8 L0 0 Z" fill="#606060" /></svg>
  </div>
);

const App = () => {
  return (
    <div className="flex h-screen flex-col overflow-hidden bg-white">
      <BrowserChrome />
      <div className="flex min-h-0 flex-1">
        <RecordPage />
        <Scrollbar />
      </div>
      <Taskbar />
    </div>
  );
};

export default App;
